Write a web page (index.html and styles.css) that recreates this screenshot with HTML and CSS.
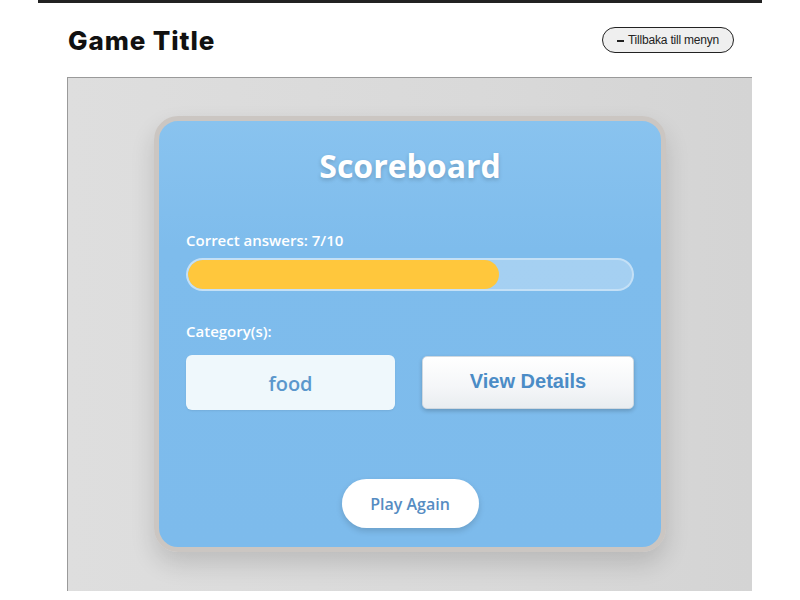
FILE: index.html
```html
<!DOCTYPE html>
<html lang="sv">
<head>
<meta charset="utf-8">
<title>Game Title</title>
<link rel="stylesheet" href="styles.css">
</head>
<body>
<div class="page">
  <header class="header">
    <h1 class="title">Game Title</h1>
    <button class="back"><span class="arrow"></span>Tillbaka till menyn</button>
  </header>
  <main class="stage">
    <section class="card">
      <h2 class="card-title">Scoreboard</h2>
      <p class="label score-label">Correct answers: 7/10</p>
      <div class="bar"><div class="fill" style="width: 70%"></div></div>
      <p class="label cat-label">Category(s):</p>
      <div class="row">
        <div class="cat">food</div>
        <button class="details">View Details</button>
      </div>
      <div class="actions">
        <button class="play">Play Again</button>
      </div>
    </section>
  </main>
</div>
</body>
</html>
```
FILE: styles.css
```css
* { box-sizing: border-box; }
html, body { margin: 0; padding: 0; background: #fff; }
body { font-family: "Open Sans", "Liberation Sans", sans-serif; }

.page {
  width: 724px;
  margin: 0 auto;
  border-top: 3px solid #222;
}

.header {
  height: 74px;
  display: flex;
  align-items: center;
  justify-content: space-between;
  padding: 0 28px 0 30px;
}

.title {
  margin: 0;
  font-family: Inter, "Liberation Sans", sans-serif;
  font-weight: 800;
  font-size: 26px;
  letter-spacing: 0.9px;
  color: #111;
}

.back {
  height: 26px;
  width: 132px;
  padding: 0;
  border: 1.5px solid #222;
  border-radius: 13px;
  background: #efefef;
  font-family: "Liberation Sans", Arial, sans-serif;
  font-size: 12px;
  letter-spacing: -0.2px;
  color: #222;
  display: flex;
  align-items: center;
  justify-content: center;
  gap: 4px;
}

.arrow {
  display: inline-block;
  width: 7px;
  height: 2px;
  background: #222;
  margin-top: 1px;
}

.stage {
  margin: 0 10px 0 29px;
  height: 514px;
  border-top: 1px solid #9a9a9a;
  border-left: 1px solid #9a9a9a;
  background: linear-gradient(90deg, #dedede 0%, #d9d9d9 60%, #d4d4d4 100%);
  display: flex;
  justify-content: center;
  padding-top: 38px;
}

.card {
  width: 512px;
  height: 436px;
  border: 5px solid #cbc6c2;
  border-radius: 24px;
  background: linear-gradient(180deg, #89c3ef 0%, #7ebcec 30%, #7dbbec 100%);
  box-shadow: 0 12px 24px rgba(0, 0, 0, 0.14);
  padding: 0 27px;
  display: flex;
  flex-direction: column;
}

.card-title {
  margin: 25px 0 0;
  text-align: center;
  font-size: 32px;
  line-height: 40px;
  font-weight: 700;
  color: #fff;
  text-shadow: 0 2px 4px rgba(0, 0, 0, 0.18);
}

.label {
  margin: 0;
  font-size: 15px;
  line-height: 20px;
  font-weight: 600;
  color: #fff;
}

.score-label { margin-top: 44px; }

.bar {
  margin-top: 8px;
  height: 33px;
  border: 2px solid rgba(255, 255, 255, 0.35);
  border-radius: 17px;
  background: rgba(255, 255, 255, 0.3);
  overflow: hidden;
}

.fill {
  height: 100%;
  background: #ffc73c;
  border-radius: 17px;
}

.cat-label { margin-top: 30px; }

.row {
  margin-top: 14px;
  display: grid;
  grid-template-columns: 209px 212px;
  justify-content: space-between;
  height: 55px;
}

.cat {
  background: #eff8fc;
  border-radius: 6px;
  display: flex;
  align-items: center;
  justify-content: center;
  font-size: 20px;
  font-weight: 600;
  color: #5b97cc;
  box-shadow: 0 1px 2px rgba(0, 0, 0, 0.08);
  padding-top: 2px;
}

.details {
  margin: 1px 0;
  border: 1px solid #cfd8e0;
  border-radius: 5px;
  background: linear-gradient(180deg, #ffffff 0%, #f4f6f8 60%, #e9edf0 100%);
  box-shadow: 0 2px 4px rgba(0, 0, 0, 0.2);
  font-family: "Liberation Sans", Arial, sans-serif;
  font-weight: 700;
  font-size: 20px;
  color: #4b8cc6;
  padding-bottom: 4px;
}

.actions {
  margin-top: 69px;
  display: flex;
  justify-content: center;
}

.play {
  width: 137px;
  height: 49px;
  border: none;
  border-radius: 25px;
  background: #fff;
  box-shadow: 0 3px 6px rgba(0, 0, 0, 0.15);
  font-family: "Open Sans", sans-serif;
  font-size: 16px;
  font-weight: 600;
  color: #568cc2;
}
```
